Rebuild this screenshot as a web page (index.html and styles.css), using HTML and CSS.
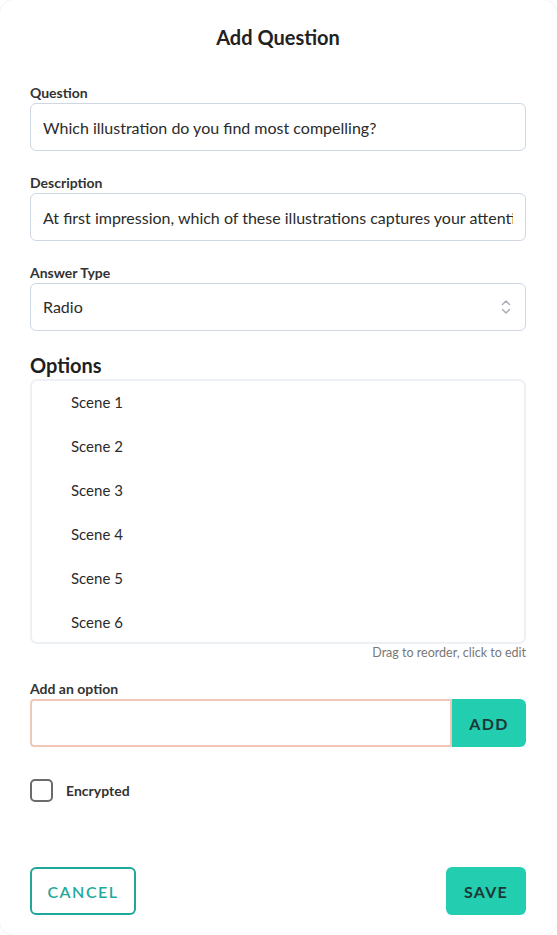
FILE: index.html
```html
<!DOCTYPE html>
<html>
<head>
<meta charset="utf-8">
<link rel="stylesheet" href="styles.css">
</head>
<body>
<div class="modal">
  <h1 class="title">Add Question</h1>
  <div class="field first">
    <label class="label">Question</label>
    <input class="input" type="text" value="Which illustration do you find most compelling?">
  </div>
  <div class="field">
    <label class="label">Description</label>
    <input class="input" type="text" value="At first impression, which of these illustrations captures your attention the most?">
  </div>
  <div class="field">
    <label class="label">Answer Type</label>
    <div class="input select">
      <span>Radio</span>
      <svg class="chev" width="10" height="16" viewBox="0 0 10 16"><path d="M1.5 5.5 L5 2 L8.5 5.5" fill="none" stroke="#a9afb8" stroke-width="1.5" stroke-linecap="round" stroke-linejoin="round"/><path d="M1.5 10.5 L5 14 L8.5 10.5" fill="none" stroke="#a9afb8" stroke-width="1.5" stroke-linecap="round" stroke-linejoin="round"/></svg>
    </div>
  </div>
  <h2 class="options-title">Options</h2>
  <ul class="options">
    <li>Scene 1</li>
    <li>Scene 2</li>
    <li>Scene 3</li>
    <li>Scene 4</li>
    <li>Scene 5</li>
    <li>Scene 6</li>
  </ul>
  <div class="hint">Drag to reorder, click to edit</div>
  <div class="field add-field">
    <label class="label">Add an option</label>
    <div class="add-row">
      <input class="input add-input" type="text" value="">
      <button class="btn-add">ADD</button>
    </div>
  </div>
  <div class="check-row">
    <span class="checkbox"></span>
    <span class="check-label">Encrypted</span>
  </div>
  <div class="footer">
    <button class="btn-cancel">CANCEL</button>
    <button class="btn-save">SAVE</button>
  </div>
</div>
</body>
</html>
```
FILE: styles.css
```css
* { box-sizing: border-box; }
html, body { margin: 0; padding: 0; background: #fff; }
body {
  font-family: Lato, "Open Sans", sans-serif;
  color: #2b2b2b;
  width: 557px;
  height: 935px;
}
.modal {
  width: 557px;
  height: 935px;
  border-radius: 14px;
  box-shadow: 0 0 2px rgba(0,0,0,0.12);
  padding: 24px 31px 0 30px;
  background: #fff;
}
.title {
  margin: 0;
  text-align: center;
  font-size: 20px;
  font-weight: 700;
  color: #222;
  line-height: 26px;
}
.field { margin: 0; }
.field.first { margin-top: 34px; }
.label {
  display: block;
  font-size: 14px;
  font-weight: 700;
  color: #333;
  line-height: 17px;
  margin-bottom: 2px;
}
.input {
  display: block;
  width: 100%;
  height: 48px;
  border: 1px solid #cfd7e2;
  border-radius: 6px;
  padding: 0 12px;
  font-family: Lato, sans-serif;
  font-size: 16px;
  line-height: 46px;
  color: #2b2b2b;
  background: #fff;
  margin: 0 0 23px 0;
  white-space: nowrap;
  overflow: hidden;
  outline: none;
}
.select {
  display: flex;
  justify-content: space-between;
  align-items: center;
  padding-right: 14px;
}
.chev { display: block; }
.options-title {
  margin: -2px 0 0 0;
  font-size: 20px;
  font-weight: 700;
  color: #1f1f1f;
  line-height: 26px;
}
.options {
  list-style: none;
  margin: 1px 0 0 0;
  padding: 1px 0 0 39px;
  height: 265px;
  border: 2px solid #edf1f5;
  border-radius: 7px;
}
.options li {
  font-size: 15px;
  line-height: 20px;
  height: 44px;
  padding-top: 10px;
  color: #2b2b2b;
}
.hint {
  text-align: right;
  font-size: 12.5px;
  color: #777;
  line-height: 16px;
  margin-top: 1px;
}
.add-field { margin-top: 19px; }
.add-row { display: flex; }
.add-input {
  flex: 1;
  width: auto;
  border: 2px solid #f1c7b9;
  border-radius: 4px 0 0 4px;
  margin-bottom: 0;
}
.btn-add {
  width: 74px;
  height: 48px;
  border: none;
  background: #22cdb0;
  color: #1d3737;
  font-family: Lato, sans-serif;
  font-size: 16px;
  font-weight: 700;
  letter-spacing: 1.3px;
  border-radius: 0 6px 6px 0;
  padding: 0;
}
.check-row {
  display: flex;
  align-items: center;
  margin-top: 32px;
}
.checkbox {
  width: 23px;
  height: 23px;
  border: 2px solid #6b6b6b;
  border-radius: 5px;
  margin-right: 13px;
}
.check-label {
  font-size: 14px;
  font-weight: 700;
  color: #333;
}
.footer {
  display: flex;
  justify-content: space-between;
  margin-top: 65px;
}
.btn-cancel {
  width: 106px;
  height: 48px;
  border: 2px solid #1fa89a;
  background: #fff;
  color: #1fa89a;
  border-radius: 6px;
  font-family: Lato, sans-serif;
  font-size: 16px;
  font-weight: 600;
  letter-spacing: 1.5px;
  padding: 0;
}
.btn-save {
  width: 80px;
  height: 48px;
  border: none;
  background: #22cdb0;
  color: #1d3737;
  border-radius: 6px;
  font-family: Lato, sans-serif;
  font-size: 16px;
  font-weight: 700;
  letter-spacing: 1.2px;
  padding: 0;
}
```
